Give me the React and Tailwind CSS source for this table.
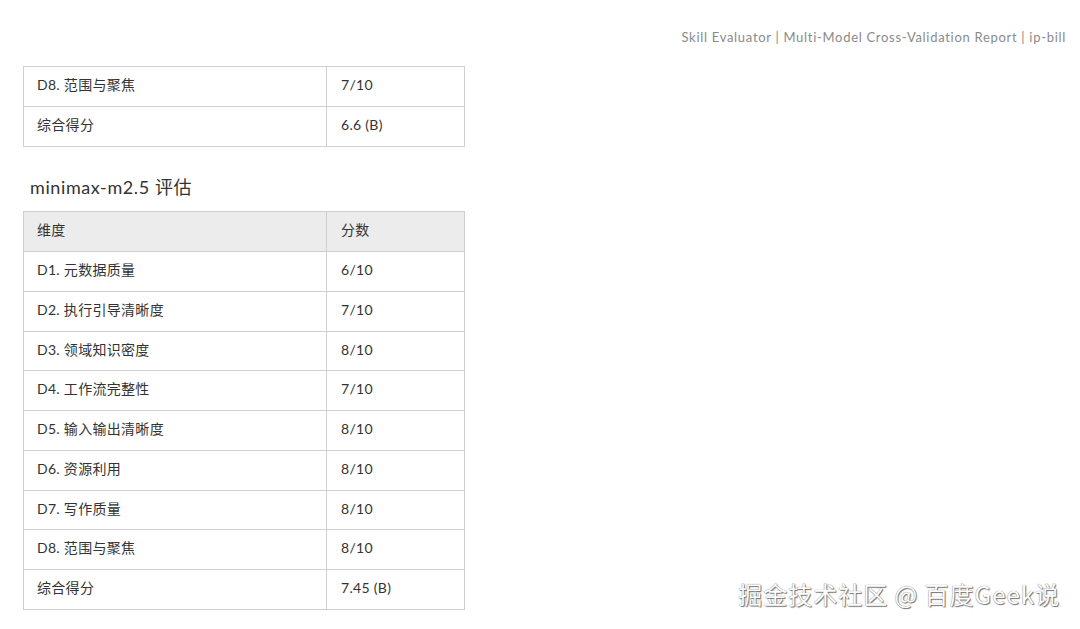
import React from "react";

const font = { fontFamily: "Lato, 'Noto Sans CJK SC', sans-serif" };

function Row({ a, b, header, short }) {
  return (
    <div className={`flex ${short ? "h-[39px]" : "h-[40px]"} border-b border-[#cfcfcf] ${header ? "bg-[#ececec]" : "bg-white"}`}>
      <div className="w-[303px] shrink-0 border-r border-[#cfcfcf] flex items-center pl-[13px] pb-[4px]">{a}</div>
      <div className="flex-1 flex items-center pl-[14px] pb-[4px]">{b}</div>
    </div>
  );
}

export default function App() {
  const rows = [
    ["D1. 元数据质量", "6/10"],
    ["D2. 执行引导清晰度", "7/10"],
    ["D3. 领域知识密度", "8/10", true],
    ["D4. 工作流完整性", "7/10"],
    ["D5. 输入输出清晰度", "8/10"],
    ["D6. 资源利用", "8/10"],
    ["D7. 写作质量", "8/10", true],
    ["D8. 范围与聚焦", "8/10"],
    ["综合得分", "7.45 (B)"],
  ];
  return (
    <div className="relative w-[1080px] h-[629px] overflow-hidden bg-white text-[#333]" style={font}>
      <div className="flex justify-end pr-[14px] pt-[28px] h-[66px] text-[13px] leading-[18px] tracking-[0.7px] text-[#8a8a8a]">
        Skill Evaluator | Multi-Model Cross-Validation Report | ip-bill
      </div>
      <div className="pl-[23px] text-[14px] tracking-[0.3px]">
        <div className="w-[442px] border-x border-t border-[#cfcfcf]">
          <Row a="D8. 范围与聚焦" b="7/10" />
          <Row a="综合得分" b="6.6 (B)" />
        </div>
        <div className="h-[64px] flex items-center pl-[7px] pt-[17px] text-[18px] tracking-[0.6px] text-[#333]">
          minimax-m2.5 评估
        </div>
        <div className="w-[442px] border-x border-t border-[#cfcfcf]">
          <Row a="维度" b="分数" header />
          {rows.map(([a, b, s]) => (
            <Row key={a} a={a} b={b} short={s} />
          ))}
        </div>
      </div>
      <div
        className="absolute right-[20px] bottom-[20px] text-[24px] leading-[30px] text-white tracking-[1px] [text-shadow:0_0_1px_#555,1px_1px_1px_#777]"
        style={{ fontFamily: "'Noto Sans CJK SC', sans-serif" }}
      >
        掘金技术社区 @ 百度Geek说
      </div>
    </div>
  );
}
